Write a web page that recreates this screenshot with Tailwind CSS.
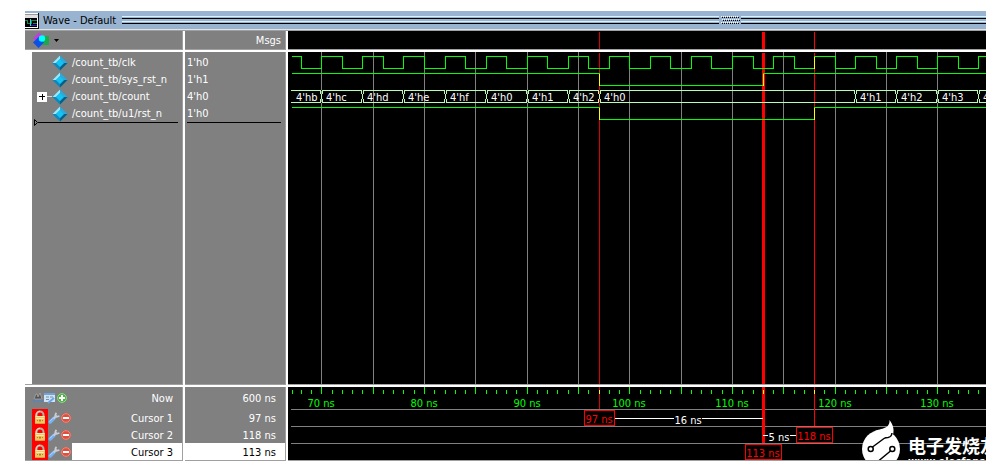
<!DOCTYPE html>
<html lang="en">
<head>
<meta charset="utf-8">
<title>Wave - Default</title>
<script src="https://cdn.jsdelivr.net/npm/@tailwindcss/browser@4"></script>
</head>
<body class="bg-white font-['DejaVu_Sans_Condensed','DejaVu_Sans',sans-serif] text-[11px] leading-[17px] text-white">
<svg class="hidden">
  <defs>
    <symbol id="signal" viewBox="0 0 16 16">
      <path d="M8 .500 15.500 8 8 15.500.500 8Z" fill="#1496cf"/>
      <path d="M8 .500.500 8H4L8 4Z" fill="#9be6f7"/>
      <path d="M8 .500 15.500 8H12L8 4Z" fill="#2fa9d8"/>
      <path d="M15.500 8 8 15.500V12L12 8Z" fill="#075f86"/>
      <path d="M.500 8 8 15.500V12L4 8Z" fill="#1186bb"/>
      <path d="M8 4 12 8 8 12 4 8Z" fill="#12c3f4"/>
    </symbol>
    <symbol id="lock" viewBox="0 0 16 17">
      <path d="M4.500 8V6a3.500 3.500 0 0 1 7 0V8" fill="none" stroke="#b4b09c" stroke-width="2"/>
      <path d="M4 7V6a3.800 3.800 0 0 1 4-3.700" fill="none" stroke="#e4e0d0"/>
      <rect x="3" y="7" width="10" height="8" rx=".5" fill="#f0c766"/>
      <path d="M3.500 7.500h9M4 9.500h8" stroke="#ffe9a8"/>
      <path d="M5 11.500h1M7 11.500h2M10 11.500h1M8 10.500v2.500" stroke="#b98120"/>
      <path d="M3 14.500h10" stroke="#d9a13a"/>
    </symbol>
    <symbol id="wrench" viewBox="0 0 12 12">
      <path d="M2.200 10 6 6.200" stroke="#76b0f4" stroke-width="3.400" stroke-linecap="round"/>
      <path d="M1.800 9.400 5 6.200" stroke="#b5d7ff" stroke-width="1"/>
      <path d="M5.500 6.500 8 4M8.200 .800 7.300 3.200 8.800 4.800 11.400 4" fill="none" stroke="#c9ced6" stroke-width="1.800"/>
    </symbol>
    <symbol id="minus" viewBox="0 0 12 12">
      <circle cx="6" cy="6" r="5" fill="#dd5040"/>
      <circle cx="6" cy="6" r="4.300" fill="none" stroke="#f08c80"/>
      <path d="M3 6h6" stroke="#fff" stroke-width="2"/>
    </symbol>
  </defs>
</svg>

<main class="mt-[11px] mr-[21px] ml-[25px]">
  <header class="flex h-5 items-center border-b border-[#a0a0a0] bg-[#99b4d1] shadow-[inset_0_-1px_#e3e3e3]">
    <svg class="h-4 w-[14px] shrink-0" viewBox="0 0 14 16" shape-rendering="crispEdges" aria-hidden="true">
      <path d="M0 0h14v16H0z" fill="#111"/><path d="M0 0h13v1H0z" fill="#fff"/><path d="M0 1h13v1H0z" fill="#999"/><path d="M0 2h13v3H0z" fill="#e0e0e0"/>
      <path d="M12 5h1v10H0v-1h12z" fill="#fff"/>
      <path d="M0 5h12v9H0z" fill="#000"/>
      <path d="M0 7.500h2.500v3H5M6.500 11V7.500h5M8 10.500h4" fill="none" stroke="#1b8a50"/>
      <path d="M5.500 6v7" stroke="#20e0e0"/><path d="M6 12.500h6" stroke="#3020c8"/>
    </svg>
    <h1 class="ml-1 text-[11px] whitespace-nowrap text-black">Wave - Default</h1>
    <svg class="ml-1.5 h-[9px] min-w-0 flex-1" shape-rendering="crispEdges" aria-hidden="true">
      <rect width="100%" height="1" y="0" fill="#d7f2fb"/><rect width="100%" height="1" y="2" fill="#000"/>
      <rect width="100%" height="1" y="5" fill="#d7f2fb"/><rect width="100%" height="1" y="7" fill="#000"/>
      <svg x="597" width="22" height="9"><rect width="22" height="9" fill="#99b4d1"/><g id="grip"></g></svg>
    </svg>
  </header>

  <div class="grid grid-cols-[158px_101px_minmax(0,1fr)] gap-x-[2px] bg-white">
    <!-- Toolbar and column heads -->
    <div class="flex h-[19px] items-center border-r border-b border-[#a0a0a0] bg-[#808080] pl-[7px]">
      <button class="flex items-center gap-1" aria-label="Object type filter">
        <svg class="h-4 w-[18px]" viewBox="0 0 18 16" aria-hidden="true">
          <path d="M1 6.500 7 .500 12 5 9 9H4.500Z" fill="#c23be0"/><path d="M10 4h7v9H9z" fill="#1fa84a"/>
          <path d="M6.500 5 12 10.500 6.500 16 1 10.500Z" fill="#0b50e8"/><circle cx="10" cy="6.500" r="3.200" fill="#0ff"/>
        </svg>
        <svg class="h-[3px] w-[5px]" viewBox="0 0 5 3" aria-hidden="true"><path d="M0 0h5L2.500 3z" fill="#000"/></svg>
      </button>
    </div>
    <div class="flex h-[19px] items-center justify-end border-r border-b border-[#a0a0a0] bg-[#808080] pr-1">Msgs</div>
    <div class="h-[19px] border-b border-[#a0a0a0] bg-black"><svg id="head" class="block h-full w-full" shape-rendering="crispEdges"></svg></div>

    <!-- Signals -->
    <section class="mt-0.5 border-r border-b border-[#a0a0a0] bg-white pl-[7px]" aria-label="Signals">
      <div class="h-full bg-[#808080] pt-0.5">
        <ul>
          <li class="flex h-[17px] items-center gap-1 pl-5"><svg class="size-4"><use href="#signal"/></svg>/count_tb/clk</li>
          <li class="flex h-[17px] items-center gap-1 pl-5"><svg class="size-4"><use href="#signal"/></svg>/count_tb/sys_rst_n</li>
          <li class="flex h-[17px] items-center pl-[5px]">
            <button class="flex" aria-label="Expand /count_tb/count"><svg class="h-[11px] w-[15px]" viewBox="0 0 15 11" shape-rendering="crispEdges" aria-hidden="true"><path d="M0 1h10v10H0z" fill="#fff"/><path d="M2 5.500h6M5 3v6" stroke="#000"/><path d="M10 5.500h5" stroke="#d8d8d8"/></svg></button>
            <svg class="mr-1 size-4"><use href="#signal"/></svg>/count_tb/count</li>
          <li class="flex h-[17px] items-center gap-1 pl-5"><svg class="size-4"><use href="#signal"/></svg>/count_tb/u1/rst_n</li>
        </ul>
        <div class="-mt-[3px] mr-1 flex h-[7px] items-center pl-[2px]"><svg class="h-[7px] w-1" viewBox="0 0 4 7" aria-hidden="true"><path d="M.5.500v6L3.500 3.500z" fill="none" stroke="#000"/></svg><div class="h-px flex-1 bg-black"></div></div>
      </div>
    </section>
    <section class="mt-0.5 border-r border-b border-[#a0a0a0] bg-[#808080] pt-0.5 pl-0.5" aria-label="Values">
      <ul><li>1'h0</li><li>1'h1</li><li>4'h0</li><li>1'h0</li></ul>
      <div class="mr-1 h-px bg-black"></div>
    </section>
    <section class="mt-0.5 h-[333px] border-b border-[#a0a0a0] bg-black" aria-label="Waveforms"><svg id="wave" class="block h-full w-full" shape-rendering="crispEdges"></svg></section>

    <!-- Cursors -->
    <section class="mt-0.5 border-r border-b border-[#a0a0a0] bg-[#808080]" aria-label="Cursors">
      <div class="flex h-[22px] items-center gap-px pr-[9px] pl-2">
        <button aria-label="Find cursor"><svg class="block h-3 w-[10px]" viewBox="0 0 10 12" aria-hidden="true"><path d="M1 7 3 2H4L5 5 7 1 9 7Z" fill="#555" stroke="#bbb" stroke-width=".6"/><path d="M0 9h10M2 7.500 0 9l2 1.500M8 7.500 10 9 8 10.500" fill="none" stroke="#4d86c8"/></svg></button>
        <button aria-label="Edit grid and timeline"><svg class="block h-3 w-[11px]" viewBox="0 0 11 12" aria-hidden="true"><path d="M0 1h11v9H0z" fill="#cfe3f7"/><path d="M0 1h11v2H0z" fill="#6fa3dc"/><path d="M2 5h3M6 5h3M2 7.500h3" stroke="#7b8fa5"/><path d="M4 11 10 6" stroke="#6aa5ea" stroke-width="2"/></svg></button>
        <button aria-label="Add cursor"><svg class="block size-3" viewBox="0 0 12 12" aria-hidden="true"><circle cx="6" cy="6" r="5" fill="#4cae43"/><circle cx="6" cy="6" r="4.400" fill="none" stroke="#9ad68e"/><path d="M3 6h6M6 3v6" stroke="#fff" stroke-width="2"/></svg></button>
        <span class="ml-auto">Now</span>
      </div>
      <div class="flex h-[17px] items-center pl-[7px]">
        <button class="bg-[#f00]" aria-label="Unlock cursor 1"><svg class="block h-[17px] w-4"><use href="#lock"/></svg></button>
        <button aria-label="Edit cursor 1"><svg class="block size-3"><use href="#wrench"/></svg></button>
        <button aria-label="Delete cursor 1"><svg class="block size-3"><use href="#minus"/></svg></button>
        <span class="h-[17px] flex-1 pt-px pr-[9px] text-right">Cursor 1</span>
      </div>
      <div class="flex h-[17px] items-center pl-[7px]">
        <button class="bg-[#f00]" aria-label="Unlock cursor 2"><svg class="block h-[17px] w-4"><use href="#lock"/></svg></button>
        <button aria-label="Edit cursor 2"><svg class="block size-3"><use href="#wrench"/></svg></button>
        <button aria-label="Delete cursor 2"><svg class="block size-3"><use href="#minus"/></svg></button>
        <span class="h-[17px] flex-1 pt-px pr-[9px] text-right">Cursor 2</span>
      </div>
      <div class="flex h-[17px] items-center pl-[7px]">
        <button class="bg-[#f00]" aria-label="Unlock cursor 3"><svg class="block h-[17px] w-4"><use href="#lock"/></svg></button>
        <button aria-label="Edit cursor 3"><svg class="block size-3"><use href="#wrench"/></svg></button>
        <button aria-label="Delete cursor 3"><svg class="block size-3"><use href="#minus"/></svg></button>
        <span class="h-[17px] flex-1 bg-white pt-px pr-[9px] text-right text-black">Cursor 3</span>
      </div>
    </section>
    <section class="mt-0.5 border-r border-b border-[#a0a0a0] bg-[#808080] text-right" aria-label="Cursor times">
      <div class="h-[22px] pt-px pr-[9px] leading-[22px]">600 ns</div>
      <div class="h-[17px] pt-px pr-[9px]">97 ns</div>
      <div class="h-[17px] pt-px pr-[9px]">118 ns</div>
      <div class="h-[17px] bg-white pt-px pr-[9px] text-black">113 ns</div>
    </section>
    <section class="relative mt-0.5 overflow-hidden border-b border-[#a0a0a0] bg-black" aria-label="Timeline">
      <svg id="time" class="block h-[73px] w-full" shape-rendering="crispEdges"></svg>
      <div class="absolute top-[33px] right-0 h-[41px] w-[124px] overflow-hidden">
        <svg class="absolute top-0 left-0 h-[41px] w-10" viewBox="0 0 40 41" aria-hidden="true">
          <circle cx="19" cy="29" r="19" fill="#fff"/>
          <path d="M27.500 0C31 5 32.500 9 31 15L12 11.300C20 8 28 9 27.500 0Z" fill="#fff"/>
          <path d="M10.500 27 22 18.500Q23.500 17.500 26 17.500 29.500 17 30 13M17 40.500 28.500 31" fill="none" stroke="#000" stroke-width="1.500"/>
          <circle cx="8.700" cy="29" r="2.500" fill="#fff" stroke="#000" stroke-width="1.500"/><circle cx="30.300" cy="29" r="2.500" fill="#fff" stroke="#000" stroke-width="1.500"/>
        </svg>
        <div class="ml-[46px] pt-3.5 whitespace-nowrap">
          <p class="font-['Noto_Sans_CJK_SC',sans-serif] text-lg leading-[22px] font-bold" lang="zh">电子发烧友</p>
          <p class="font-['DejaVu_Sans_Condensed','DejaVu_Sans',sans-serif] text-[11px] leading-3 font-bold">www.elecfans.com</p>
        </div>
      </div>
    </section>
  </div>
</main>

<script>
  // Time to pixel inside the wave pane: 70 ns sits at 33 px, 616 px cover 60 ns.
  const X = t => Math.ceil(33 + (t - 70) * 616 / 60 - 0.15);
  const LEFT = 3;
  const rect = (x, y, w, h, c) => `<rect x="${x}" y="${y}" width="${w}" height="${h}" fill="${c}"/>`;
  const text = (x, y, s, c, anchor = 'start') => `<text x="${x}" y="${y}" fill="${c}" font-size="11" text-anchor="${anchor}">${s}</text>`;
  const line = (d, c) => `<path d="${d}" fill="none" stroke="${c}"/>`;
  const GREEN = '#00ff00', BUS = '#b4ffb4', RED = '#ff0000', DARKRED = '#dc0000', GRAY = '#808080';
  const cursors = (y, h) => rect(X(97), y, 1, h, DARKRED) + rect(X(113) - 1, y, 3, h, RED) + rect(X(118), y, 1, h, RED);

  function draw() {
    // The side columns and margins take 309 px; the rest shows the timeline.
    const T1 = 70 + (window.innerWidth - 309 - 33) * 60 / 616;

    document.getElementById('head').innerHTML = cursors(1, 30);

    let w = '';
    for (let t = 70; t < T1; t += 5) w += rect(X(t), 0, 1, 340, GRAY);
    w += cursors(1, 340);

    // Clock toggles every 2 ns.
    let d = `M${LEFT + 1} 4.5H${X(68)}.5`, high = true;
    for (let t = 68; t < T1; t += 2) { high = !high; d += `V${high ? 4 : 16}.5H${X(t + 2)}.5`; }
    w += line(d, GREEN);
    w += line(`M4 21.5H${X(97)}.5V33.5H${X(113)}.5V21.5H3000`, GREEN);
    w += line(`M4 55.5H${X(97)}.5V67.5H${X(118)}.5V55.5H3000`, GREEN);
    for (const [t, y] of [[97, 21], [97, 55], [113, 21], [118, 55], [118, 4]]) w += rect(X(t), y + 1, 1, 12, '#ffff00');

    // Counter bus.
    w += rect(LEFT, 38, 3000, 1, BUS) + rect(LEFT, 50, 3000, 1, BUS);
    const bus = [[67.15, "4'hb"], [70, "4'hc"], [74, "4'hd"], [78, "4'he"], [82, "4'hf"], [86, "4'h0"], [90, "4'h1"], [94, "4'h2"], [97, "4'h0"], [122, "4'h1"], [126, "4'h2"], [130, "4'h3"], [134, "4'h4"]];
    bus.forEach(([t, v], i) => {
      const x = X(t);
      if (i) w += rect(x, 38, 1, 1, '#000') + rect(x, 50, 1, 1, '#000')
        + rect(x - 1, 39, 1, 3, BUS) + rect(x + 1, 39, 1, 3, BUS) + rect(x, 42, 1, 5, BUS)
        + rect(x - 1, 47, 1, 3, BUS) + rect(x + 1, 47, 1, 3, BUS);
      w += text(x + (i ? 5 : 4), 49, v, '#fff');
    });
    document.getElementById('wave').innerHTML = w;

    // Timeline with ticks, cursor boxes and the distances between them.
    let s = '';
    for (let t = 68; t < T1; t++) s += t % 5 ? rect(X(t), 3, 1, 4, GREEN) : rect(X(t), 0, 1, 7, GREEN);
    s += rect(4, 3, 1, 4, GREEN);
    for (let t = 70; t < T1; t += 10) s += text(X(t), 20, t + ' ns', GREEN, 'middle');
    for (const y of [22, 39, 56]) s += rect(LEFT, y, 3000, 1, GRAY);
    s += rect(X(97), 0, 1, 22, DARKRED) + rect(X(113) - 1, 0, 3, 56, RED) + rect(X(118), 0, 1, 39, RED);
    for (const t of [97, 113, 118]) s += rect(X(t), 3, 1, 4, '#ffff00');
    const box = (x, y, wd, label) => `<rect x="${x}.5" y="${y}.5" width="${wd}" height="15" fill="#000" stroke="${RED}"/>` + text(x + wd / 2, y + 13, label, RED, 'middle');
    s += rect(327, 31, 59, 1, '#fff') + rect(414, 31, 61, 1, '#fff') + text(400, 37, '16 ns', '#fff', 'middle');
    s += rect(475, 48, 5, 1, '#fff') + rect(502, 48, 6, 1, '#fff') + text(491, 54, '5 ns', '#fff', 'middle');
    s += box(296, 23, 30, '97 ns') + box(508, 40, 36, '118 ns') + box(457, 57, 36, '113 ns');
    document.getElementById('time').innerHTML = s;
  }
  draw();
  window.addEventListener('resize', draw);

  let g = '';
  for (let r = 0; r < 3; r++) for (let i = 0; i < 9; i++) g += rect(2 + i * 2 + r % 2, r * 3, 1, 1, '#fff') + rect(3 + i * 2 + r % 2, r * 3 + 1, 1, 1, '#000');
  document.getElementById('grip').innerHTML = g;
</script>
</body>
</html>
